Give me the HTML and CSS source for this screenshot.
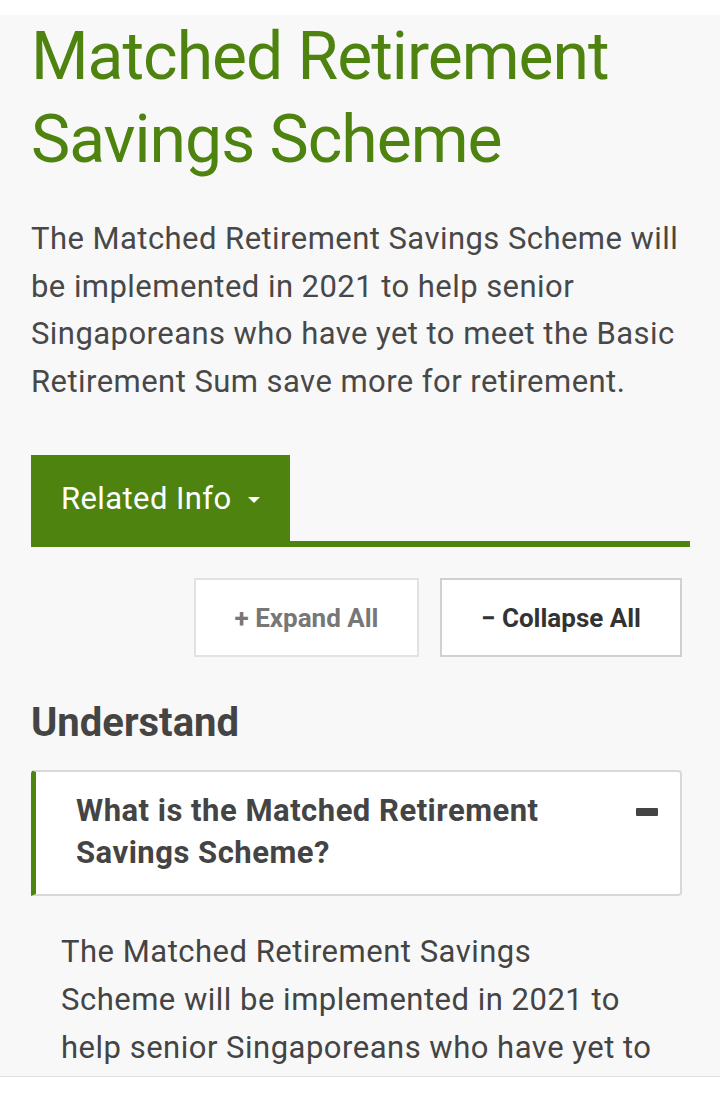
FILE: index.html
```html
<!DOCTYPE html>
<html lang="en">
<head>
  <meta charset="UTF-8">
  <title>Matched Retirement Savings Scheme</title>
  <link rel="stylesheet" href="styles.css">
</head>
<body>

  <!-- Contenido principal -->
  <div class="page">
    <h1 class="titulo">Matched Retirement Savings Scheme</h1>

    <p class="intro">The Matched Retirement Savings Scheme will be implemented in 2021 to help senior Singaporeans who have yet to meet the Basic Retirement Sum save more for retirement.</p>

    <div class="tabs">
      <button class="tab-activa">Related Info <span class="caret"></span></button>
    </div>

    <div class="acciones">
      <button class="btn-accion expandir">+ Expand All</button>
      <button class="btn-accion colapsar">&minus; Collapse All</button>
    </div>

    <h2 class="seccion">Understand</h2>

    <div class="acordeon">
      <div class="acordeon-cabecera">
        <span class="acordeon-titulo">What is the Matched Retirement Savings Scheme?</span>
        <span class="menos"></span>
      </div>
    </div>

    <p class="respuesta">The Matched Retirement Savings Scheme will be implemented in 2021 to help senior Singaporeans who have yet to meet the Basic Retirement Sum save more for retirement.</p>
  </div>

</body>
</html>
```

FILE: styles.css
```css
body {
  margin: 0;
  padding: 0;
  background: #fff;
  font-family: Roboto, "Liberation Sans", sans-serif;
  color: #484848;
}

/* Fondo gris de la pagina */
.page {
  margin-top: 15px;
  height: 1062px;
  overflow: hidden;
  background: #f8f8f8;
  border-bottom: 1px solid #e0e0e0;
  padding: 0 30px 0 31px;
  box-sizing: border-box;
}

.titulo {
  margin: 0;
  font-size: 66px;
  line-height: 83px;
  font-weight: 400;
  letter-spacing: -1px;
  color: #4e830f;
}

.intro {
  margin: 34px 0 0;
  font-size: 31px;
  line-height: 47.5px;
  letter-spacing: 0.45px;
}

/* Pestana */
.tabs {
  margin-top: 50px;
  border-bottom: 6px solid #4e830f;
}

.tab-activa {
  display: block;
  background: #4e830f;
  color: #fff;
  border: none;
  height: 86px;
  width: 259px;
  padding: 0 0 0 30px;
  text-align: left;
  font-family: Roboto, sans-serif;
  font-size: 31px;
  letter-spacing: 0.4px;
}

.caret {
  display: inline-block;
  width: 0;
  height: 0;
  margin-left: 8px;
  vertical-align: middle;
  border-left: 6px solid transparent;
  border-right: 6px solid transparent;
  border-top: 6px solid #fff;
}

/* Botones expandir / colapsar */
.acciones {
  display: flex;
  justify-content: flex-end;
  gap: 21px;
  margin-top: 31px;
  padding-right: 8px;
}

.btn-accion {
  height: 79px;
  background: #fff;
  border: 2px solid #dcdcdc;
  font-family: Roboto, sans-serif;
  font-size: 26px;
  font-weight: bold;
}

.expandir {
  width: 225px;
  color: #777;
  border-color: #e2e2e2;
}

.colapsar {
  width: 242px;
  color: #333;
  border-color: #d0d0d0;
}

.seccion {
  margin: 42px 0 0;
  font-size: 40px;
  line-height: 48px;
  color: #444;
}

/* Acordeon */
.acordeon {
  margin-top: 23px;
  margin-right: 8px;
  background: #fff;
  border: 2px solid #d8d8d8;
  border-left: 5px solid #4e830f;
  border-radius: 4px 4px 4px 0;
}

.acordeon-cabecera {
  display: flex;
  justify-content: space-between;
  align-items: flex-start;
  padding: 18px 22px 20px 40px;
}

.acordeon-titulo {
  width: 500px;
  font-size: 31px;
  font-weight: bold;
  line-height: 42px;
  letter-spacing: 0.5px;
  color: #444;
}

.menos {
  width: 22px;
  height: 8px;
  margin-top: 18px;
  background: #444;
  border-radius: 1px;
}

.respuesta {
  margin: 32px 0 0;
  padding: 0 38px 0 30px;
  font-size: 31px;
  line-height: 48px;
  letter-spacing: 0.5px;
  color: #444;
}
```
